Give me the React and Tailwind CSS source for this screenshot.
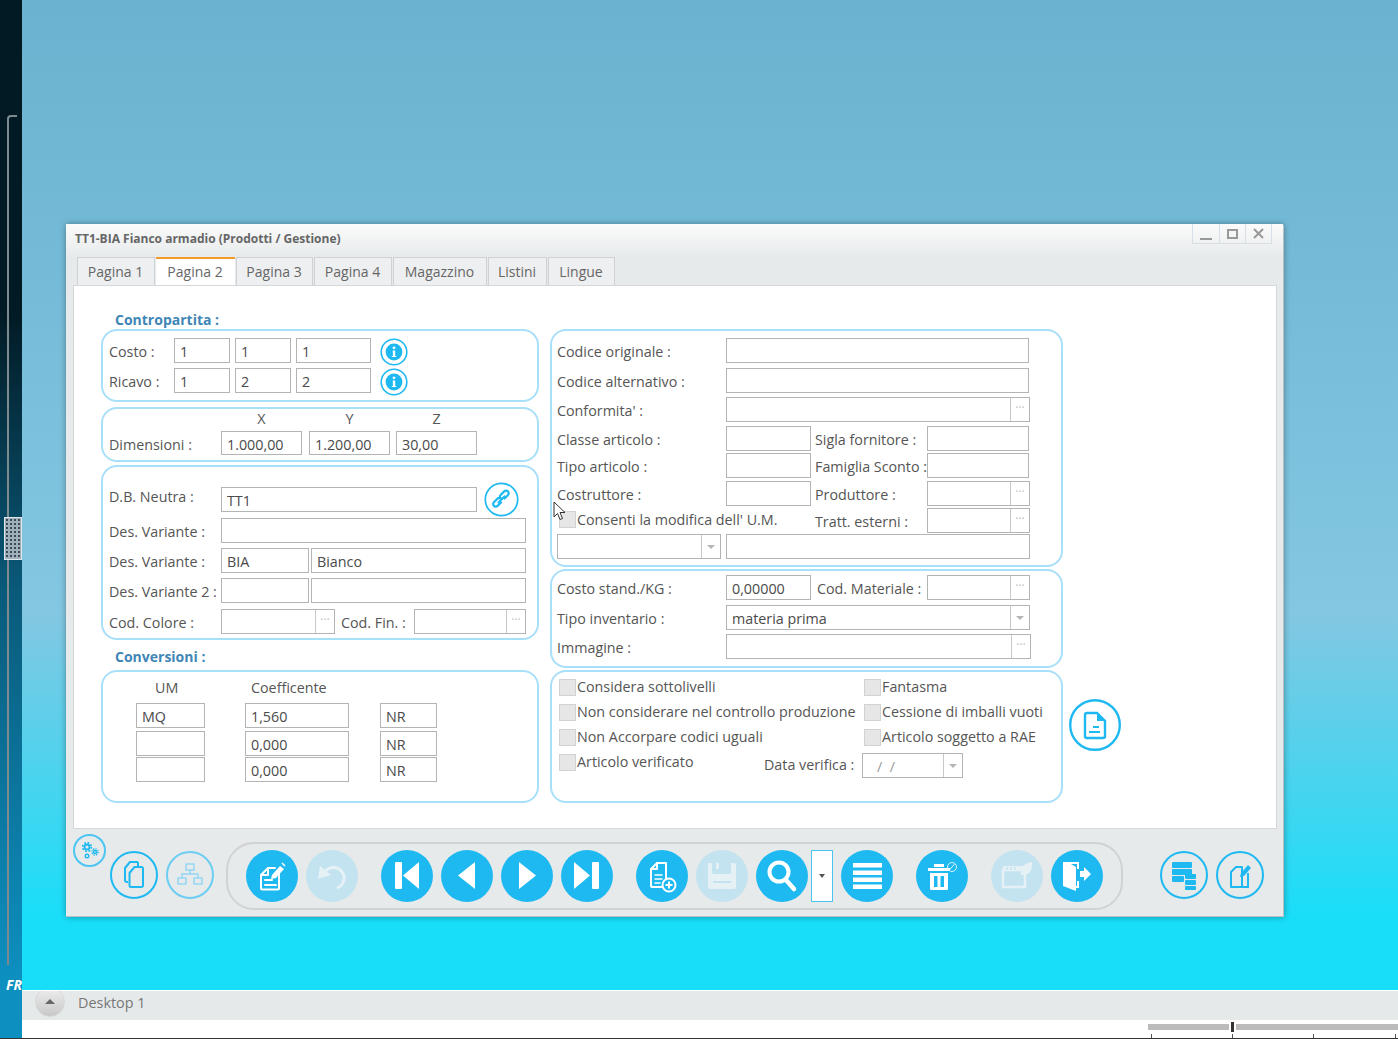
import React from "react";

const BLUE = "#1fb9f2";

function Input({ w, v, dots, arrow, className = "", muted }) {
  return (
    <div style={{ width: w }} className={`h-[25px] shrink-0 flex items-stretch border border-[#b4b4b4] bg-white ${className}`}>
      <span className={`flex-1 min-w-0 pl-[5px] pt-[3px] leading-[20px] ${muted ? "text-[#999]" : "text-[#4a4a4a]"}`}>{v}</span>
      {dots && <span className="w-[19px] border-l border-[#c8c8c8] text-[#c0c0c0] text-[12px] leading-[20px] text-center">···</span>}
      {arrow && (
        <span className="w-[19px] border-l border-[#c8c8c8] flex items-center justify-center">
          <span className="w-0 h-0 border-l-[4px] border-r-[4px] border-t-[4px] border-l-transparent border-r-transparent border-t-[#b5b5b5]" />
        </span>
      )}
    </div>
  );
}

const Panel = ({ h, left, className = "", children }) => (
  <div style={{ height: h }} className={`border-2 border-[#a8dff9] rounded-[16px] ${left ? "pl-[6px]" : "pl-[5px]"} ${className}`}>{children}</div>
);

const Label = ({ w, children, className = "" }) => (
  <span style={{ width: w }} className={`shrink-0 whitespace-nowrap pt-[3px] ${className}`}>{children}</span>
);

const Row = ({ className = "", children }) => <div className={`flex items-center ${className}`}>{children}</div>;

const Check = ({ children, className = "" }) => (
  <div className={`flex items-center whitespace-nowrap ${className}`}>
    <span className="w-[17px] h-[17px] mr-[1px] shrink-0 bg-[#e6e6e6] border border-[#d2d2d2]" />
    {children}
  </div>
);

const InfoIcon = () => (
  <svg width="28" height="28" viewBox="0 0 28 28" className="shrink-0">
    <circle cx="14" cy="14" r="12.8" fill="#fff" stroke={BLUE} strokeWidth="1.6" />
    <circle cx="14" cy="14" r="8.4" fill={BLUE} />
    <circle cx="14" cy="9.8" r="1.4" fill="#fff" />
    <path d="M12.6 12.6h2.6v5.4h1v1h-4.4v-1h1.1v-4.4h-.3z" fill="#fff" />
  </svg>
);

const LinkIcon = () => (
  <svg width="35" height="35" viewBox="0 0 35 35" className="shrink-0">
    <circle cx="17.5" cy="17.5" r="16.2" fill="#fff" stroke={BLUE} strokeWidth="1.7" />
    <g fill="none" stroke={BLUE} strokeWidth="2.2" strokeLinecap="round">
      <path d="M15.5 19.5l-3.4 3.4a2.6 2.6 0 0 1-3.7-3.7l3.6-3.6a2.6 2.6 0 0 1 3.7 0" transform="translate(1.5 1)" />
      <path d="M19.5 15.5l3.4-3.4a2.6 2.6 0 0 0-3.7-3.7l-3.6 3.6a2.6 2.6 0 0 0 0 3.7" transform="translate(1 1)" />
      <path d="M14.5 20.5l6-6" />
    </g>
  </svg>
);

const W = { fill: "#fff" };
const SW = { fill: "none", stroke: "#fff", strokeWidth: 2, strokeLinejoin: "round", strokeLinecap: "round" };
const PF = { fill: "#e6f1f5" };
const PS = { fill: "none", stroke: "#e6f1f5", strokeWidth: 2.5, strokeLinejoin: "round" };

const icons = {
  edit: (
    <g>
      <path {...SW} d="M33 23v15a1.500 1.500 0 0 1-1.500 1.500h-15A1.500 1.500 0 0 1 15 38V25l7-7h7" />
      <path {...SW} d="M22 18v7h-7" />
      <path {...SW} d="M19 30h7M19 35h11" />
      <path {...W} d="M26 25l8-9 4 3-8 9-5 1z" />
      <path d="M36 13l3 3" stroke="#fff" strokeWidth="1.500" />
    </g>
  ),
  undo: (
    <g>
      <path {...PS} strokeWidth="3" d="M19 22a10.500 10.500 0 1 1 12 16" />
      <path {...PF} d="M12 29l2-13 11 9z" />
    </g>
  ),
  first: (
    <g>
      <rect {...W} x="14" y="12" width="7" height="27" rx="1" />
      <path {...W} d="M22 25.500L38 12v27z" />
    </g>
  ),
  prev: <path {...W} d="M17 25.500L34 12v27z" />,
  next: <path {...W} d="M18 12l17 13.500L18 39z" />,
  last: (
    <g>
      <path {...W} d="M13 12l16 13.500L13 39z" />
      <rect {...W} x="31" y="12" width="7" height="27" rx="1" />
    </g>
  ),
  newdoc: (
    <g>
      <path {...SW} d="M30 32V13h-9l-6 6v17a1 1 0 0 0 1 1h10" />
      <path {...SW} d="M21 13v6h-6" />
      <path {...SW} strokeWidth="1.500" d="M19 25h7M19 29h7M19 33h5" />
      <circle cx="33" cy="35" r="6.500" fill={BLUE} stroke="#fff" strokeWidth="2" />
      <path d="M33 31.500v7M29.500 35h7" stroke="#fff" strokeWidth="2" />
    </g>
  ),
  save: (
    <g>
      <path {...PF} d="M12 13h4v9a2 2 0 0 0 2 2h15a2 2 0 0 0 2-2v-9h3a2 2 0 0 1 2 2v22a2 2 0 0 1-2 2H14a2 2 0 0 1-2-2z" />
      <path d="M20 13h3v6h-3z" fill="#e6f1f5" />
      <path d="M17 32h18" stroke="#c2e3ef" strokeWidth="2" />
    </g>
  ),
  search: (
    <g>
      <circle cx="23" cy="22" r="9.500" fill="none" stroke="#fff" strokeWidth="4" />
      <path d="M30 30l8 9" stroke="#fff" strokeWidth="4.500" strokeLinecap="round" />
    </g>
  ),
  menu: (
    <g {...W}>
      <rect x="12" y="13" width="29" height="4.500" />
      <rect x="12" y="20.500" width="29" height="4.500" />
      <rect x="12" y="27.500" width="29" height="4.500" />
      <rect x="12" y="34.500" width="29" height="4.500" />
    </g>
  ),
  trash: (
    <g>
      <path {...W} d="M12 18h22v3H12zM18 14h10v3H18z" />
      <path {...W} d="M14 23h18v15.500a1.500 1.500 0 0 1-1.500 1.500h-15a1.500 1.500 0 0 1-1.500-1.500z" />
      <path fill={BLUE} d="M18 26h3.500v11H18zM24.500 26H28v11h-3.500z" />
      <circle cx="36" cy="17" r="4.500" fill="none" stroke="#d8f2fc" strokeWidth="1" />
      <path d="M33.500 20l5-6" stroke="#d8f2fc" strokeWidth="1" />
    </g>
  ),
  film: (
    <g>
      <path {...PS} d="M12 20h22v17H12z" />
      <path {...PF} d="M12 16h24v5H12z" />
      <path d="M16 17v3M20 17v3M24 17v3" stroke="#c2e3ef" strokeWidth="1.500" />
      <path {...PF} d="M30 25c-2-8 4-12 11-13 1 7-2 14-11 13z" />
    </g>
  ),
  exit: (
    <g>
      <path {...W} d="M12 12h16v7h-2v-5h-6l5 3v19h1v-5h2v7h-3v3L12 36z" />
      <path {...W} d="M29 21h4v-4l7 7-7 7v-4h-4z" />
    </g>
  ),
};

const RoundBtn = ({ name, pale, className = "" }) => (
  <span className={`w-[52px] h-[52px] shrink-0 rounded-full ${pale ? "bg-[#c2e3ef]" : "bg-[#1fb9f2]"} ${className}`}>
    <svg width="52" height="52" viewBox="0 0 52 52">{icons[name]}</svg>
  </span>
);

const OutlineBtn = ({ children, className = "" }) => (
  <span className={`w-[48px] h-[48px] shrink-0 rounded-full border-2 border-[#1fb9f2] flex items-center justify-center ${className}`}>
    <svg width="44" height="44" viewBox="0 0 44 44">{children}</svg>
  </span>
);

export default function App() {
  return (
    <div className="relative w-[1398px] h-[1039px] overflow-hidden flex flex-col bg-white text-[14.3px] leading-[20px] text-[#555] font-['Open_Sans',sans-serif]">
      <div className="flex flex-1 min-h-0">
        {/* left strip */}
        <div className="relative w-[22px] shrink-0 bg-[linear-gradient(to_bottom,#021a24_0%,#021a24_30%,#0a5a7a_57%,#0d8fbf_94%,#0d8fbf_100%)]">
          <div className="absolute left-[7px] top-[115px] w-[10px] h-[850px] border-l-2 border-t-2 border-[#7d8a90] rounded-tl-[4px]" />
          <div className="absolute left-[4px] top-[517px] w-[18px] h-[43px] border border-[#dfe6ea] bg-[#9fb0ba] bg-[radial-gradient(circle,#3c4a55_1px,transparent_1.2px)] bg-[length:4px_4px]" />
          <span className="absolute left-[6px] top-[975px] text-[14px] font-bold italic text-white overflow-hidden w-[16px] leading-[20px]">FR</span>
        </div>
        <div className="flex-1 min-w-0 flex flex-col">
          {/* desktop */}
          <div className="relative flex-1 border-b border-white bg-[linear-gradient(to_bottom,#6ab2cf_0%,#83c7e2_62%,#18def9_93%,#18def9_100%)]">
            {/* window */}
            <div className="absolute left-[44px] top-[224px] w-[1218px] h-[693px] flex flex-col bg-[#e7eaeb] rounded-t-[3px] border-r border-b border-[#b8c2c6] shadow-[0_0_6px_rgba(0,0,0,0.35)]">
              {/* title */}
              <div className="h-[33px] shrink-0 flex items-start bg-[linear-gradient(to_bottom,#fbfbfb,#e7eaeb)]">
                <span className="ml-[9px] mt-[6px] text-[12px] font-bold text-[#666] leading-[17px] whitespace-nowrap">TT1-BIA Fianco armadio (Prodotti / Gestione)</span>
                <div className="ml-auto mr-[11px] flex h-[20px]">
                  <span className="w-[27px] border-l border-b border-[#d5dfe5] flex items-end justify-center pb-[3px]"><span className="w-[12px] h-[2px] bg-[#999]" /></span>
                  <span className="w-[26px] border-l border-b border-[#d5dfe5] flex items-center justify-center"><span className="w-[11px] h-[10px] border-2 border-[#999]" /></span>
                  <span className="w-[27px] border-x border-b border-[#d5dfe5] flex items-center justify-center">
                    <svg width="13" height="13" viewBox="0 0 13 13"><path d="M2 2l9 9M11 2l-9 9" stroke="#999" strokeWidth="2" /></svg>
                  </span>
                </div>
              </div>
              {/* tabs */}
              <div className="h-[28px] shrink-0 flex pl-[11px] gap-[1px] text-[14px] leading-[26px]">
                {[["Pagina 1", 78], ["Pagina 2", 79], ["Pagina 3", 77], ["Pagina 4", 78], ["Magazzino", 94], ["Listini", 59], ["Lingue", 67]].map(([t, w], i) => (
                  <span
                    key={t}
                    style={{ width: w }}
                    className={`text-center pr-[1px] text-[#666] ${i === 1 ? "bg-white border-t-2 border-[#f39a2b]" : "bg-[#eeeff0] border-t border-x border-[#cfd2d4] pt-[1px]"}`}
                  >
                    {t}
                  </span>
                ))}
              </div>
              {/* page */}
              <div className="h-[544px] shrink-0 ml-[7px] mr-[6px] bg-white border border-[#d4d8da] flex pl-[27px] pt-[26px]">
                {/* left column */}
                <div className="w-[438px] shrink-0">
                  <div className="h-[17px] pl-[14px] font-bold text-[14px] leading-[16px] text-[#3f86b6]">Contropartita :</div>
                  <Panel left h={73} className="pt-[7px]">
                    <Row className="h-[25px]">
                      <Label w={65}>Costo :</Label>
                      <Input w={56} v="1" />
                      <Input w={56} v="1" className="ml-[5px]" />
                      <Input w={75} v="1" className="ml-[5px]" />
                      <span className="ml-[9px] mt-[2px]"><InfoIcon /></span>
                    </Row>
                    <Row className="h-[25px] mt-[5px]">
                      <Label w={65}>Ricavo :</Label>
                      <Input w={56} v="1" />
                      <Input w={56} v="2" className="ml-[5px]" />
                      <Input w={75} v="2" className="ml-[5px]" />
                      <span className="ml-[9px] mt-[2px]"><InfoIcon /></span>
                    </Row>
                  </Panel>
                  <Panel left h={55} className="mt-[5px]">
                    <div className="flex h-[22px] leading-[20px] ml-[112px] text-center">
                      <span className="w-[81px]">X</span>
                      <span className="w-[81px] ml-[7px]">Y</span>
                      <span className="w-[81px] ml-[6px]">Z</span>
                    </div>
                    <Row className="h-[24px]">
                      <Label w={112}>Dimensioni :</Label>
                      <Input w={81} v="1.000,00" className="!h-[24px]" />
                      <Input w={81} v="1.200,00" className="!h-[24px] ml-[7px]" />
                      <Input w={81} v="30,00" className="!h-[24px] ml-[6px]" />
                    </Row>
                  </Panel>
                  <Panel left h={175} className="mt-[3px] pt-[20px]">
                    <Row className="h-[25px]">
                      <Label w={112} className="-mt-[8px]">D.B. Neutra :</Label>
                      <Input w={256} v="TT1" />
                      <span className="ml-[7px]"><LinkIcon /></span>
                    </Row>
                    <Row className="mt-[6px]">
                      <Label w={112}>Des. Variante :</Label>
                      <Input w={305} />
                    </Row>
                    <Row className="mt-[5px]">
                      <Label w={112}>Des. Variante :</Label>
                      <Input w={88} v="BIA" />
                      <Input w={215} v="Bianco" className="ml-[2px]" />
                    </Row>
                    <Row className="mt-[5px]">
                      <Label w={112}>Des. Variante 2 :</Label>
                      <Input w={88} />
                      <Input w={215} className="ml-[2px]" />
                    </Row>
                    <Row className="mt-[6px]">
                      <Label w={112}>Cod. Colore :</Label>
                      <Input w={114} dots />
                      <Label w={73} className="ml-[6px]">Cod. Fin. :</Label>
                      <Input w={112} dots />
                    </Row>
                  </Panel>
                  <div className="h-[30px] pl-[14px] pt-[8px] font-bold text-[14px] leading-[18px] text-[#3f86b6]">Conversioni :</div>
                  <Panel left h={133} className="pt-[6px]">
                    <div className="flex h-[19px] leading-[19px]">
                      <span className="ml-[46px] w-[96px]">UM</span>
                      <span>Coefficente</span>
                    </div>
                    {[["MQ", "1,560", "mt-[6px]"], ["", "0,000", "mt-[3px]"], ["", "0,000", "mt-[1px]"]].map(([a, b, m], i) => (
                      <Row key={i} className={m}>
                        <Input w={69} v={a} className="ml-[27px]" />
                        <Input w={104} v={b} className="ml-[40px]" />
                        <Input w={57} v="NR" className="ml-[31px]" />
                      </Row>
                    ))}
                  </Panel>
                </div>
                {/* right column */}
                <div className="w-[513px] shrink-0 ml-[11px] pt-[17px]">
                  <Panel h={238} className="pt-[7px]">
                    <Row>
                      <Label w={169}>Codice originale :</Label>
                      <Input w={303} />
                    </Row>
                    <Row className="mt-[5px]">
                      <Label w={169}>Codice alternativo :</Label>
                      <Input w={303} />
                    </Row>
                    <Row className="mt-[4px]">
                      <Label w={169}>Conformita' :</Label>
                      <Input w={304} dots />
                    </Row>
                    <Row className="mt-[4px]">
                      <Label w={169}>Classe articolo :</Label>
                      <Input w={85} />
                      <Label w={112} className="ml-[4px]">Sigla fornitore :</Label>
                      <Input w={102} />
                    </Row>
                    <Row className="mt-[2px]">
                      <Label w={169}>Tipo articolo :</Label>
                      <Input w={85} />
                      <Label w={112} className="ml-[4px]">Famiglia Sconto :</Label>
                      <Input w={102} />
                    </Row>
                    <Row className="mt-[3px]">
                      <Label w={169}>Costruttore :</Label>
                      <Input w={85} />
                      <Label w={112} className="ml-[4px]">Produttore :</Label>
                      <Input w={103} dots />
                    </Row>
                    <Row className="mt-[2px]">
                      <Check className="w-[258px] -mt-[2px] pl-[2px]">Consenti la modifica dell' U.M.</Check>
                      <Label w={112}>Tratt. esterni :</Label>
                      <Input w={103} dots />
                    </Row>
                    <Row className="mt-[1px]">
                      <Input w={164} arrow />
                      <Input w={304} className="ml-[5px]" />
                    </Row>
                  </Panel>
                  <Panel h={99} className="mt-[2px] pt-[4px]">
                    <Row>
                      <Label w={169}>Costo stand./KG :</Label>
                      <Input w={85} v="0,00000" />
                      <Label w={110} className="ml-[6px]">Cod. Materiale :</Label>
                      <Input w={103} dots />
                    </Row>
                    <Row className="mt-[5px]">
                      <Label w={169}>Tipo inventario :</Label>
                      <Input w={304} v="materia prima" arrow />
                    </Row>
                    <Row className="mt-[4px]">
                      <Label w={169}>Immagine :</Label>
                      <Input w={305} dots />
                    </Row>
                  </Panel>
                  <Panel h={133} className="mt-[2px] pt-[5px]">
                    <Row className="h-[20px]">
                      <Check className="w-[307px] pl-[2px]">Considera sottolivelli</Check>
                      <Check>Fantasma</Check>
                    </Row>
                    <Row className="h-[20px] mt-[5px]">
                      <Check className="w-[307px] pl-[2px]">Non considerare nel controllo produzione</Check>
                      <Check>Cessione di imballi vuoti</Check>
                    </Row>
                    <Row className="h-[20px] mt-[5px]">
                      <Check className="w-[307px] pl-[2px]">Non Accorpare codici uguali</Check>
                      <Check>Articolo soggetto a RAE</Check>
                    </Row>
                    <Row className="h-[20px] mt-[5px]">
                      <Check className="w-[207px] pl-[2px]">Articolo verificato</Check>
                      <Label w={98} className="mt-[3px]">Data verifica :</Label>
                      <Input w={101} v={<span className="pl-[9px]">/&nbsp;&nbsp;/</span>} arrow muted className="mt-[7px]" />
                    </Row>
                  </Panel>
                </div>
                {/* doc button */}
                <div className="ml-[6px] mt-[387px] shrink-0">
                  <svg width="52" height="52" viewBox="0 0 52 52">
                    <circle cx="26" cy="26" r="24.800" fill="#fff" stroke={BLUE} strokeWidth="2.400" />
                    <path d="M16 16a2 2 0 0 1 2-2h10l8 8v15a2 2 0 0 1-2 2H18a2 2 0 0 1-2-2z" fill="none" stroke={BLUE} strokeWidth="2.400" />
                    <path d="M28 13l9 9h-9z" fill={BLUE} />
                    <path d="M24 28h6M20 33h11" stroke={BLUE} strokeWidth="2" />
                  </svg>
                </div>
              </div>
              {/* toolbar */}
              <div className="relative flex-1 flex items-start pl-[44px] pt-[22px]">
                <span className="absolute left-[7px] top-[5px] w-[33px] h-[33px] rounded-full border-2 border-[#4cc5f2] flex items-center justify-center">
                  <svg width="26" height="26" viewBox="0 0 26 26" fill="none" stroke={BLUE}>
                    <circle cx="10" cy="9" r="2.500" strokeWidth="1.800" />
                    <circle cx="10" cy="9" r="4.300" strokeWidth="1.800" strokeDasharray="1.700 1.680" />
                    <circle cx="18" cy="14" r="1.500" strokeWidth="1.500" />
                    <circle cx="18" cy="14" r="3.100" strokeWidth="1.400" strokeDasharray="1.300 1.130" />
                    <circle cx="10" cy="18" r="1.800" strokeWidth="1.400" />
                  </svg>
                </span>
                <OutlineBtn>
                  <g fill="none" stroke={BLUE} strokeWidth="2" strokeLinejoin="round">
                    <path d="M16 29h-1a2 2 0 0 1-2-2V15l5-6h7a1 1 0 0 1 1 1v4" />
                    <path d="M19 34a1.500 1.500 0 0 1-1.500-1.500V20l5-6h7a1.500 1.500 0 0 1 1.500 1.500v17a1.500 1.500 0 0 1-1.500 1.500z" />
                  </g>
                </OutlineBtn>
                <OutlineBtn className="ml-[8px] border-[#6ccdf3]">
                  <g fill="none" stroke="#8fd6f3" strokeWidth="1.400">
                    <rect x="18" y="11" width="8" height="6" />
                    <rect x="10" y="25" width="8" height="6" />
                    <rect x="26" y="25" width="8" height="6" />
                    <path d="M22 17v4M14 25v-4h16v4" />
                  </g>
                </OutlineBtn>
                <div className="ml-[12px] -mt-[9px] w-[897px] h-[68px] shrink-0 rounded-[28px] border-2 border-[#d0d2d3] flex items-center pl-[18px]">
                  <RoundBtn name="edit" />
                  <RoundBtn name="undo" pale className="ml-[8px]" />
                  <RoundBtn name="first" className="ml-[23px]" />
                  <RoundBtn name="prev" className="ml-[8px]" />
                  <RoundBtn name="next" className="ml-[8px]" />
                  <RoundBtn name="last" className="ml-[8px]" />
                  <RoundBtn name="newdoc" className="ml-[23px]" />
                  <RoundBtn name="save" pale className="ml-[8px]" />
                  <RoundBtn name="search" className="ml-[8px]" />
                  <span className="ml-[3px] w-[22px] h-[52px] shrink-0 bg-white border border-[#4cc5f2] flex items-center justify-center">
                    <span className="w-0 h-0 border-l-[3px] border-r-[3px] border-t-[4px] border-l-transparent border-r-transparent border-t-[#555]" />
                  </span>
                  <RoundBtn name="menu" className="ml-[8px]" />
                  <RoundBtn name="trash" className="ml-[23px]" />
                  <RoundBtn name="film" pale className="ml-[23px]" />
                  <RoundBtn name="exit" className="ml-[8px]" />
                </div>
                <OutlineBtn className="ml-[37px]">
                  <g fill={BLUE}>
                    <rect x="10" y="9" width="20" height="6" rx="1" />
                    <rect x="10" y="16" width="20" height="6" rx="1" />
                    <rect x="10" y="23" width="12" height="6" rx="1" />
                    <rect x="23" y="21" width="11" height="5" rx="1" />
                    <rect x="23" y="27" width="11" height="5" rx="1" />
                    <rect x="23" y="33" width="11" height="4" rx="1" />
                  </g>
                </OutlineBtn>
                <OutlineBtn className="ml-[8px]">
                  <path d="M13 19l5-5h6v20H13z" fill="none" stroke={BLUE} strokeWidth="2" strokeLinejoin="round" />
                  <path d="M13 34h17V20" fill="none" stroke={BLUE} strokeWidth="2" />
                  <path d="M23 20l7-8 3 3-7 8-4 1z" fill={BLUE} />
                </OutlineBtn>
              </div>
            </div>
          </div>
          {/* bottom bars */}
          <div className="h-[29px] shrink-0 bg-[#e6e9ea] flex items-center pl-[13px] text-[14.4px] text-[#777]">
            <span className="w-[30px] h-[30px] -mt-[8px] rounded-full border border-[#d8d8d8] bg-[linear-gradient(to_bottom,#eeeeee,#c8c8c8)] flex items-center justify-center">
              <span className="w-0 h-0 border-l-[5px] border-r-[5px] border-b-[5px] border-l-transparent border-r-transparent border-b-[#666]" />
            </span>
            <span className="ml-[13px] -mt-[5px]">Desktop 1</span>
          </div>
          <div className="relative h-[18px] shrink-0">
            <div className="absolute left-[1126px] top-[4px] w-[81px] h-[6px] bg-[#bbb]" />
            <div className="absolute left-[1209px] top-[2px] w-[3px] h-[10px] bg-[#333]" />
            <div className="absolute left-[1214px] top-[4px] w-[162px] h-[6px] bg-[#bbb]" />
            <div className="absolute left-[1129px] top-[14px] w-[1px] h-[4px] bg-[#555]" />
            <div className="absolute left-[1210px] top-[14px] w-[1px] h-[4px] bg-[#555]" />
            <div className="absolute left-[1291px] top-[14px] w-[1px] h-[4px] bg-[#555]" />
            <div className="absolute left-[1373px] top-[14px] w-[1px] h-[4px] bg-[#555]" />
          </div>
        </div>
      </div>
      <div className="h-[1px] shrink-0 bg-[#333]" />
      {/* mouse pointer */}
      <svg width="14" height="20" viewBox="0 0 14 20" className="absolute left-[553px] top-[501px]">
        <path d="M1 1v15l3.500-3.500 2.500 6 2.500-1-2.500-6H12z" fill="#fff" stroke="#333" strokeWidth="1" strokeLinejoin="round" />
      </svg>
    </div>
  );
}
